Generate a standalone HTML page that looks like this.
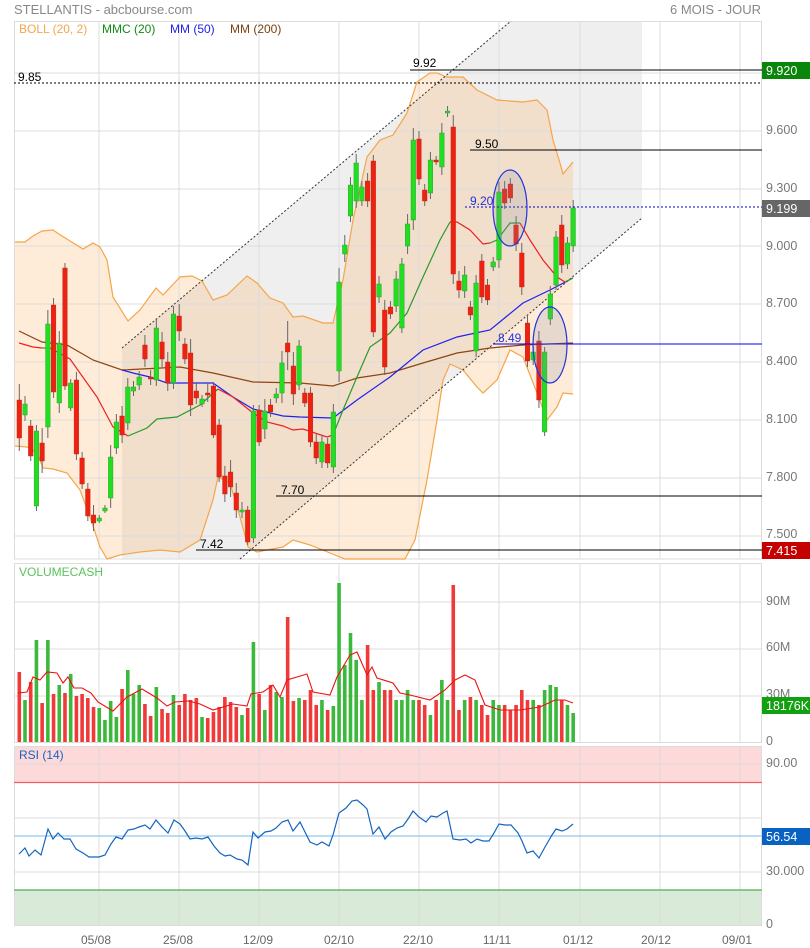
<!DOCTYPE html>
<html><head><meta charset="utf-8"><style>
body{margin:0;background:#fff;width:810px;height:948px;overflow:hidden}
svg{display:block;font-family:"Liberation Sans",sans-serif}
</style></head><body>
<svg id="s" width="810" height="948" viewBox="0 0 810 948" xmlns="http://www.w3.org/2000/svg"></svg>
<script>
var o=[];
function P(a){return a.map(function(p){return p[0]+','+p[1]}).join(' ')}
o.push('<rect x="0" y="0" width="810" height="948" fill="#fff"/>');
o.push('<rect x="14" y="746" width="748" height="37" fill="#fdd9d9"/>');
o.push('<rect x="14" y="890" width="748" height="35" fill="#d9ead8"/>');
o.push('<polygon points="122,348 511,21 642,21 642,218 240,559 122,559" fill="#efefef"/>');
var up=[[15,242],[25,242],[33,236],[42,231],[53,230],[62,236],[83,249],[93,243],[100,247],[107,260],[113,297],[128,321],[140,310],[156,288],[163,295],[180,277],[192,276],[202,281],[213,300],[227,295],[247,276],[257,283],[270,298],[283,303],[293,317],[303,316],[323,323],[333,323],[343,280],[353,220],[367,157],[380,140],[393,135],[407,113],[417,82],[430,73],[437,73],[447,77],[463,77],[477,90],[497,100],[523,102],[537,100],[547,110],[553,140],[560,163],[563,174],[573,162]];
var lo=[[15,446],[27,447],[37,453],[43,468],[53,469],[67,473],[80,490],[90,517],[100,547],[107,559],[120,555],[140,552],[160,550],[180,552],[200,540],[213,500],[218,477],[230,483],[240,517],[248,547],[257,552],[267,550],[283,547],[293,540],[300,542],[310,545],[330,553],[345,559],[405,559],[415,540],[427,480],[437,420],[443,380],[450,364],[463,370],[477,387],[483,393],[497,380],[510,350],[523,357],[537,393],[547,420],[557,407],[563,393],[573,394]];
o.push('<polygon points="'+P(up)+' '+P(lo.slice().reverse())+'" fill="#f9a040" fill-opacity="0.2"/>');
var vx=[99,179,259,339,419,499,580,660,740];
vx.forEach(function(x){o.push('<line x1="'+x+'" y1="21" x2="'+x+'" y2="559" stroke="#dcdcdc"/><line x1="'+x+'" y1="563" x2="'+x+'" y2="742" stroke="#dcdcdc"/><line x1="'+x+'" y1="746" x2="'+x+'" y2="925" stroke="#dcdcdc"/>')});
[131,189,246,304,362,420,478,536,73].forEach(function(y){o.push('<line x1="14" y1="'+y+'" x2="762" y2="'+y+'" stroke="#dcdcdc"/>')});
[602,649,696].forEach(function(y){o.push('<line x1="14" y1="'+y+'" x2="762" y2="'+y+'" stroke="#dcdcdc"/>')});
[764,818,872].forEach(function(y){o.push('<line x1="14" y1="'+y+'" x2="762" y2="'+y+'" stroke="#dcdcdc"/>')});
o.push('<rect x="14.5" y="21.5" width="747" height="537.5" fill="none" stroke="#dcdcdc"/>');
o.push('<rect x="14.5" y="563.5" width="747" height="179" fill="none" stroke="#dcdcdc"/>');
o.push('<rect x="14.5" y="746.5" width="747" height="179" fill="none" stroke="#dcdcdc"/>');
o.push('<polyline points="'+P(up)+'" fill="none" stroke="#f5a54a" stroke-width="1.2"/>');
o.push('<polyline points="'+P(lo)+'" fill="none" stroke="#f5a54a" stroke-width="1.2"/>');
o.push('<line x1="122" y1="348" x2="511" y2="21" stroke="#333" stroke-dasharray="2,2"/>');
o.push('<line x1="240" y1="559" x2="642" y2="218" stroke="#333" stroke-dasharray="2,2"/>');
o.push('<polyline points="19,331 42,342 67,345 93,360 122,370 180,367 213,373 253,382 300,383 333,386 357,378 390,373 423,363 457,353 490,348 523,345 573,343" fill="none" stroke="#8b4513" stroke-width="1.2"/>');
o.push('<polyline points="122,370 133,373 150,377 167,383 213,383 233,397 253,409 283,416 300,417 333,418 357,400 390,377 423,350 457,337 490,330 523,303 550,290 573,278" fill="none" stroke="#2020ee" stroke-width="1.2"/>');
var segs=[['r','19,343 33,347 42,348'],['g','42,348 50,348'],['r','50,348 70,359 97,397 113,427 128,436'],['g','128,436 147,428 157,419 177,417 200,405 218,389'],['r','218,389 233,397 253,413 267,422 283,426 293,430 303,429 327,437 333,435'],['g','333,435 343,410 357,377 370,347 390,333 407,313 423,277 440,240 450,222'],['r','450,222 457,222 470,230 483,244 490,243'],['g','490,243 497,240 510,223 520,223'],['r','520,223 530,240 543,260 557,277 565,282'],['g','565,282 573,278']];
segs.forEach(function(s){o.push('<polyline points="'+s[1]+'" fill="none" stroke="'+(s[0]=='r'?'#ee2020':'#2a9a2a')+'" stroke-width="1.2"/>')});
var c=[['R',400,438],['G',404,415],['R',426,456],['G',431,506],['R',443,461],['G',324,427],['R',305,392],['G',343,403],['R',268,386],['G',383,408],['R',380,454],['R',458,484],['R',489,516],['R',515,523],['G',518,521],['G',508,511],['G',457,498],['G',422,448],['R',416,435],['G',387,423],['G',387,391],['G',377,385],['R',345,359],['R',377,379],['G',328,380],['R',342,359],['R',362,383],['G',314,383],['R',316,331],['R',344,359],['R',353,405],['R',391,398],['G',399,404],['R',393,394],['R',386,435],['R',425,477],['R',476,494],['R',472,487],['R',493,510],['G',510,512],['R',510,542],['G',411,538],['R',410,442],['G',411,429],['R',405,412],['G',394,398],['G',363,393],['R',343,352],['R',366,394],['G',346,385],
['R',393,403],['R',393,442],['R',442,458],['G',442,462],['R',444,463],['G',412,467],['G',282,371],['G',245,254],['G',185,216],['G',163,201],['G',187,201],['R',181,201],['R',161,332],['G',284,297],['R',310,367],['R',307,314],['G',279,306],['G',264,328],['G',224,246],['G',140,220],['R',139,179],['R',190,201],['G',160,193],['R',160,162],['G',133,167],['G',111,113],['R',127,274],['R',281,290],['G',275,291],['R',307,315],['G',283,351],['R',261,297],['R',285,300],['G',262,267],['G',192,260],['R',189,203],['R',184,198],['R',225,244],['R',253,287],['R',323,361],['G',352,360],['R',341,400],['G',352,432],['G',294,319],['G',237,285],['R',225,265],['G',243,264],['G',208,246]];
var vol=[672,700,682,640,703,640,694,685,693,674,696,694,698,707,708,720,701,717,689,670,694,685,704,716,687,709,713,695,705,694,700,698,717,718,712,707,697,702,707,715,708,642,694,710,685,692,697,617,701,698,
700,690,705,700,710,706,583,665,633,660,700,645,690,682,690,690,700,700,690,700,700,705,715,700,680,700,585,710,700,697,700,705,715,700,705,705,710,705,690,700,700,705,690,685,687,700,705,713];
var wk=[16,8,6,6,15,14,7,12,5,4,8,6,6,10,3,3,12,8,10,9,6,6,10,7,8,10,10,8,12,6,14,8,4,10,4,6,10,12,10,8,4,6,5,12,6,6,12,22,14,6,
5,6,8,7,6,8,14,10,8,9,6,8,6,8,10,6,8,6,10,12,8,6,8,4,10,5,12,10,9,6,8,7,6,5,10,8,6,9,10,8,6,10,5,8,6,10,6,8];
c.forEach(function(d,i){var x=19.3+5.71*i,col=d[0]=='R'?'#ee2211':'#22dd22',st=d[0]=='R'?'#bb2211':'#229922',w=wk[i]||6;
o.push('<line x1="'+x+'" y1="'+(d[1]-w)+'" x2="'+x+'" y2="'+(d[2]+Math.round(w*0.8))+'" stroke="#666"/>');
o.push('<rect x="'+(x-2.3)+'" y="'+d[1]+'" width="4.6" height="'+Math.max(2,d[2]-d[1])+'" fill="'+col+'" stroke="'+st+'" stroke-width="0.4"/>');
var vy=vol[i];o.push('<rect x="'+(x-1.8)+'" y="'+vy+'" width="3.6" height="'+(742-vy)+'" fill="'+(d[0]=='R'?'#f03a3a':'#3cb83c')+'"/>');});
o.push('<polyline points="18,693 27,692 33,677 40,680 47,672 57,673 63,683 68,677 74,688 82,688 91,693 98,702 113,711 127,697 142,689 157,698 167,706 175,702 189,701 200,704 213,710 233,704 247,706 251,694 263,692 273,685 280,697 287,680 307,674 313,692 330,695 337,677 350,655 357,652 367,675 372,667 377,678 393,683 400,693 410,695 430,700 445,690 455,680 465,675 475,680 485,705 500,710 520,710 540,707 555,700 565,700 573,703" fill="none" stroke="#ee1111" stroke-width="1.1"/>');
o.push('<line x1="410" y1="70" x2="762" y2="70" stroke="#000"/><line x1="14" y1="83" x2="762" y2="83" stroke="#000" stroke-dasharray="2,2"/>');
o.push('<line x1="470" y1="150" x2="762" y2="150" stroke="#000"/><line x1="465" y1="207" x2="762" y2="207" stroke="#0000cc" stroke-dasharray="2,2"/>');
o.push('<line x1="493" y1="344" x2="762" y2="344" stroke="#0000ee"/><line x1="276" y1="496" x2="762" y2="496" stroke="#000"/><line x1="196" y1="550" x2="762" y2="550" stroke="#000"/>');
o.push('<ellipse cx="510" cy="208" rx="17" ry="38" fill="#8a8aa0" fill-opacity="0.2" stroke="#2233dd" stroke-width="1.2"/>');
o.push('<ellipse cx="550" cy="345" rx="17" ry="38" fill="#8a8aa0" fill-opacity="0.2" stroke="#2233dd" stroke-width="1.2"/>');
o.push('<line x1="14" y1="782.5" x2="762" y2="782.5" stroke="#f06060" stroke-width="1.2"/><line x1="14" y1="890" x2="762" y2="890" stroke="#4caf50" stroke-width="1.2"/><line x1="14" y1="836" x2="762" y2="836" stroke="#90c8f0" stroke-width="1.2"/>');
o.push('<polyline points="19,854 25,848 29,856 35,850 41,855 48,829 53,839 58,833 64,839 70,839 76,849 83,853 89,857 93,857 99,857 105,855 111,844 116,837 122,839 128,830 134,829 139,827 145,825 150,829 156,820 162,827 168,833 174,820 180,824 185,831 190,839 196,838 202,839 208,837 214,846 220,853 225,856 230,855 237,859 242,860 248,865 253,832 258,838 265,832 271,831 276,828 282,822 288,820 293,831 300,822 305,832 310,842 317,845 322,842 329,846 333,835 339,813 346,808 352,801 357,800 363,805 367,809 373,834 379,827 385,839 391,832 397,828 403,826 408,819 413,811 419,817 426,822 431,816 437,817 443,813 447,811 453,839 460,840 466,839 471,843 477,839 483,841 489,841 494,833 499,824 505,825 511,825 518,833 522,841 527,853 533,851 539,858 545,847 552,835 556,829 562,831 567,829 573,824" fill="none" stroke="#1565c0" stroke-width="1.2"/>');
function T(x,y,s,col,sz,anc){o.push('<text x="'+x+'" y="'+y+'" fill="'+col+'" font-size="'+(sz||12)+'"'+(anc?' text-anchor="'+anc+'"':'')+'>'+s+'</text>')}
T(14,14,'STELLANTIS - abcbourse.com','#888',13);T(761,14,'6 MOIS - JOUR','#888',13,'end');
T(19,33,'BOLL (20, 2)','#f5a54a');T(102,33,'MMC (20)','#138a13');T(170,33,'MM (50)','#2020ee');T(230,33,'MM (200)','#7a4010');
T(18,81,'9.85','#000');T(413,67,'9.92','#000');T(475,148,'9.50','#000');T(470,205,'9.20','#2233dd');T(498,342,'8.49','#2233dd');T(281,494,'7.70','#000');T(200,548,'7.42','#000');
T(19,576,'VOLUMECASH','#5cc05c');T(19,759,'RSI (14)','#1565c0');
[['9.600',134],['9.300',192],['9.000',250],['8.700',307],['8.400',365],['8.100',423],['7.800',481],['7.500',538],['90M',605],['60M',651],['30M',698],['0',745],['90.00',767],['30.000',875],['0',928]].forEach(function(l){T(766,l[1],l[0],'#777',12.5)});
o.push('<rect x="762" y="62" width="48" height="17" fill="#0a860a"/><rect x="762" y="200" width="48" height="17" fill="#666"/><rect x="762" y="542" width="48" height="17" fill="#c40000"/><rect x="762" y="697" width="48" height="17" fill="#10a010"/><rect x="762" y="828" width="48" height="17" fill="#0a62c0"/>');
T(766,75,'9.920','#fff',12.5);T(766,213,'9.199','#fff',12.5);T(766,555,'7.415','#fff',12.5);T(766,710,'18176K','#fff',12.5);T(766,841,'56.54','#fff',12.5);
[['05/08',96],['25/08',178],['12/09',258],['02/10',339],['22/10',418],['11/11',497],['01/12',578],['20/12',656],['09/01',737]].forEach(function(l){T(l[1],944,l[0],'#666',12,'middle')});
document.getElementById('s').innerHTML=o.join('');
</script>
</body></html>
